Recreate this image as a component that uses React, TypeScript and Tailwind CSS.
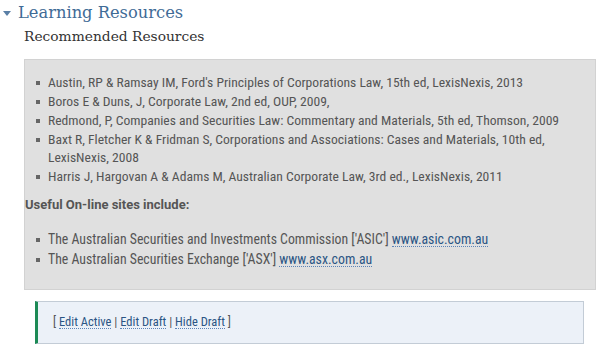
import React from "react";

const books = [
  "Austin, RP & Ramsay IM, Ford's Principles of Corporations Law, 15th ed, LexisNexis, 2013",
  "Boros E & Duns, J, Corporate Law, 2nd ed, OUP, 2009,",
  "Redmond, P, Companies and Securities Law: Commentary and Materials, 5th ed, Thomson, 2009",
  "Baxt R, Fletcher K & Fridman S, Corporations and Associations: Cases and Materials, 10th ed, LexisNexis, 2008",
  "Harris J, Hargovan A & Adams M, Australian Corporate Law, 3rd ed., LexisNexis, 2011",
];

function Bullet() {
  return <span className="absolute left-[-12px] top-[8px] h-[4px] w-[4px] bg-[#666]" />;
}

function Link({ children }: { children: React.ReactNode }) {
  return (
    <a className="inline-block border-b border-dotted border-[#5b84b8] leading-[13px] text-[#2b5584]">
      {children}
    </a>
  );
}

export default function App() {
  return (
    <div className="relative h-[350px] w-[602px] overflow-hidden bg-white font-['Roboto_Condensed',Roboto,sans-serif] font-stretch-condensed">
      <div className="flex items-center pl-[3px] pt-[1px]">
        <svg width="8" height="6" viewBox="0 0 8 6" className="mr-[7px] mt-[2px]">
          <polygon points="0,0 8,0 4,5" fill="#5a7fa6" />
        </svg>
        <h1 className="font-['DejaVu_Serif',Georgia,serif] text-[16.3px] leading-[24px] text-[#3f6b96] font-stretch-normal">
          Learning Resources
        </h1>
      </div>
      <h2 className="ml-[24px] mt-[1px] font-['DejaVu_Serif',Georgia,serif] text-[13.8px] leading-[20px] text-[#333] font-stretch-normal">
        Recommended Resources
      </h2>
      <div className="ml-[24px] mt-[13px] h-[231px] w-[572px] border border-[#d2d2d2] bg-[#e0e0e0] text-[13.6px] leading-[18px] text-[#555]">
        <ul className="ml-[23px] mt-[13px] w-[522px]">
          {books.map((b) => (
            <li key={b} className="relative mb-[1px]">
              <Bullet />
              {b}
            </li>
          ))}
        </ul>
        <p className="mt-[11px] font-['Roboto',sans-serif] text-[13px] font-bold font-stretch-normal">
          Useful On-line sites include:
        </p>
        <ul className="ml-[23px] mt-[16px] text-[13.8px]">
          <li className="relative mb-[2px]">
            <Bullet />
            The Australian Securities and Investments Commission ['ASIC'] <Link>www.asic.com.au</Link>
          </li>
          <li className="relative">
            <Bullet />
            The Australian Securities Exchange ['ASX'] <Link>www.asx.com.au</Link>
          </li>
        </ul>
      </div>
      <div className="ml-[35px] mt-[11px] flex h-[43px] w-[549px] items-center border border-l-[3px] border-[#c3ccd6] border-l-[#1c8a55] bg-[#ecf1f8] pl-[15px] text-[12.5px] text-[#555]">
        <span>
          [ <Link>Edit Active</Link> | <Link>Edit Draft</Link> | <Link>Hide Draft</Link> ]
        </span>
      </div>
    </div>
  );
}
